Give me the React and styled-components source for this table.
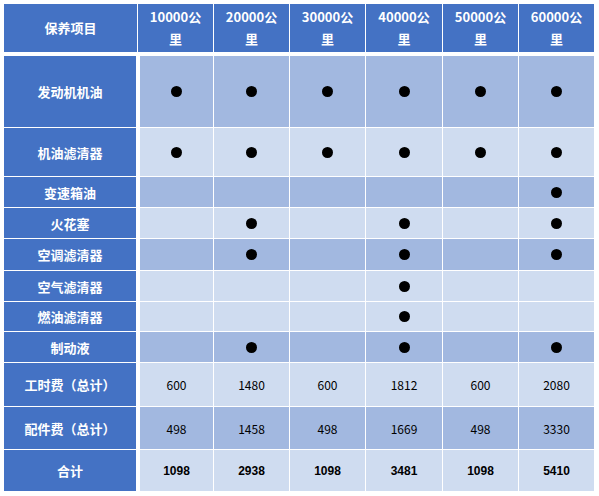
import React from 'react';
import styled, { createGlobalStyle } from 'styled-components';

const Global = createGlobalStyle`
  html, body { margin: 0; padding: 0; background: #ffffff; }
  body { font-family: "Noto Sans CJK SC", "Liberation Sans", sans-serif; }
`;

const Page = styled.div`
  padding: 4px;
`;

const Grid = styled.div`
  display: grid;
  grid-template-columns: 133px 75px 75px 75px 76px 75px 75px;
  grid-template-rows: ${(p) => p.$rows};
  column-gap: 1px;
  row-gap: 1px;
  width: 590px;
  background: #ffffff;
`;

const HeadCell = styled.div`
  background: #4472c4;
  color: #ffffff;
  font-family: "Noto Sans CJK SC", sans-serif;
  font-weight: 700;
  font-size: 13px;
  line-height: 22px;
  text-align: center;
  display: flex;
  align-items: center;
  justify-content: center;
  margin-bottom: 3px;
`;

const Label = styled.div`
  background: #4472c4;
  color: #ffffff;
  font-family: "Noto Sans CJK SC", sans-serif;
  font-weight: 700;
  font-size: 13px;
  display: flex;
  align-items: center;
  justify-content: center;
  margin-right: 1px;
  white-space: nowrap;
`;

const Cell = styled.div`
  background: ${(p) => (p.$tone === 'dark' ? '#a2b8e0' : '#cfdcf0')};
  display: flex;
  align-items: center;
  justify-content: center;
  margin-left: ${(p) => (p.$lead ? '2px' : '0')};
  color: #000000;
  font-family: ${(p) => (p.$bold ? '"Liberation Sans", sans-serif' : '"Noto Sans CJK SC", sans-serif')};
  font-weight: ${(p) => (p.$bold ? 700 : 400)};
  font-size: 12px;
`;

const Dot = styled.span`
  width: 11px;
  height: 11px;
  border-radius: 50%;
  background: #000000;
  display: block;
`;

const columns = ['10000', '20000', '30000', '40000', '50000', '60000'];

const rows = [
  { label: '发动机机油', h: 71, tone: 'dark', marks: [1, 1, 1, 1, 1, 1] },
  { label: '机油滤清器', h: 48, tone: 'light', marks: [1, 1, 1, 1, 1, 1] },
  { label: '变速箱油', h: 30, tone: 'dark', marks: [0, 0, 0, 0, 0, 1] },
  { label: '火花塞', h: 30, tone: 'light', marks: [0, 1, 0, 1, 0, 1] },
  { label: '空调滤清器', h: 31, tone: 'dark', marks: [0, 1, 0, 1, 0, 1] },
  { label: '空气滤清器', h: 30, tone: 'light', marks: [0, 0, 0, 1, 0, 0] },
  { label: '燃油滤清器', h: 29, tone: 'light', marks: [0, 0, 0, 1, 0, 0] },
  { label: '制动液', h: 30, tone: 'dark', marks: [0, 1, 0, 1, 0, 1] },
  { label: '工时费（总计）', h: 43, tone: 'light', values: [600, 1480, 600, 1812, 600, 2080] },
  { label: '配件费（总计）', h: 42, tone: 'dark', values: [498, 1458, 498, 1669, 498, 3330] },
  { label: '合计', h: 41, tone: 'light', bold: true, values: [1098, 2938, 1098, 3481, 1098, 5410] },
];

export default function App() {
  const template = `51px ${rows.map((r) => `${r.h}px`).join(' ')}`;
  return (
    <Page>
      <Global />
      <Grid $rows={template}>
        <HeadCell>保养项目</HeadCell>
        {columns.map((c) => (
          <HeadCell key={c}>
            <span>
              {c}公
              <br />
              里
            </span>
          </HeadCell>
        ))}
        {rows.map((r) => (
          <React.Fragment key={r.label}>
            <Label>{r.label}</Label>
            {columns.map((c, i) => (
              <Cell key={c} $tone={r.tone} $lead={i === 0} $bold={r.bold}>
                {r.marks ? (r.marks[i] ? <Dot /> : null) : r.values[i]}
              </Cell>
            ))}
          </React.Fragment>
        ))}
      </Grid>
    </Page>
  );
}
